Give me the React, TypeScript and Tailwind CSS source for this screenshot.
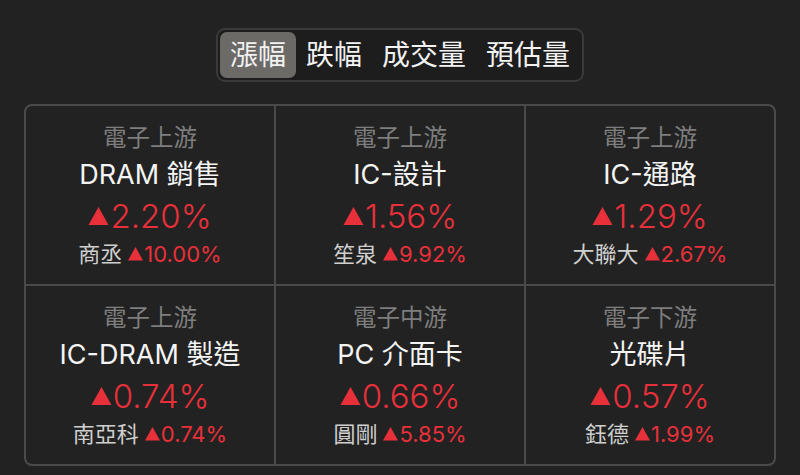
import { useState } from 'react';

const FONT = { fontFamily: 'Inter, "Noto Sans CJK TC", sans-serif' };

const tabs = ['漲幅', '跌幅', '成交量', '預估量'];

const sectors = [
  { group: '電子上游', name: 'DRAM 銷售', pct: '2.20%', stock: '商丞', stockPct: '10.00%' },
  { group: '電子上游', name: 'IC-設計', pct: '1.56%', stock: '笙泉', stockPct: '9.92%' },
  { group: '電子上游', name: 'IC-通路', pct: '1.29%', stock: '大聯大', stockPct: '2.67%' },
  { group: '電子上游', name: 'IC-DRAM 製造', pct: '0.74%', stock: '南亞科', stockPct: '0.74%' },
  { group: '電子中游', name: 'PC 介面卡', pct: '0.66%', stock: '圓剛', stockPct: '5.85%' },
  { group: '電子下游', name: '光碟片', pct: '0.57%', stock: '鈺德', stockPct: '1.99%' },
];

function Up({ size }: { size: number }) {
  return (
    <svg width={size} height={size * 0.9} viewBox="0 0 20 18" className="inline-block">
      <path d="M10 0 L20 18 L0 18 Z" fill="#e8303a" />
    </svg>
  );
}

export default function App() {
  const [active, setActive] = useState(0);

  return (
    <div className="w-[800px] h-[475px] bg-[#222222] flex flex-col items-center pt-[28px]" style={FONT}>
      <div className="flex items-center h-[54px] p-[2px] rounded-[9px] border-2 border-[#3a3a3a] bg-[#1d1d1d]">
        {tabs.map((t, i) => (
          <button
            key={t}
            onClick={() => setActive(i)}
            className={`h-full px-[10px] rounded-[7px] text-[28px] leading-none text-[#f2f2f2] ${
              i === active ? 'bg-[#6c6a67]' : ''
            }`}
          >
            {t}
          </button>
        ))}
      </div>

      <div className="mt-[22px] w-[752px] h-[362px] grid grid-cols-3 grid-rows-2 gap-[2px] bg-[#4a4a4a] border-2 border-[#4a4a4a] rounded-[8px] overflow-hidden">
        {sectors.map((s) => (
          <div key={s.name} className="bg-[#222222] flex flex-col items-center pt-[17px]">
            <div className="text-[23.5px] leading-[30px] text-[#7e7e7e]">{s.group}</div>
            <div className="mt-[6px] text-[27px] leading-[32px] text-[#f4f4f4]">{s.name}</div>
            <div className="mt-[6px] flex items-center text-[33px] leading-[38px] font-light text-[#e8303a]">
              <Up size={21} />
              <span className="ml-[1px]">{s.pct}</span>
            </div>
            <div className="mt-[5px] flex items-center text-[22px] leading-[28px]">
              <span className="text-[#cfcfcf]">{s.stock}</span>
              <span className="ml-[6px] flex items-center text-[#e8303a]">
                <Up size={15} />
                <span className="ml-[1px]">{s.stockPct}</span>
              </span>
            </div>
          </div>
        ))}
      </div>
    </div>
  );
}
